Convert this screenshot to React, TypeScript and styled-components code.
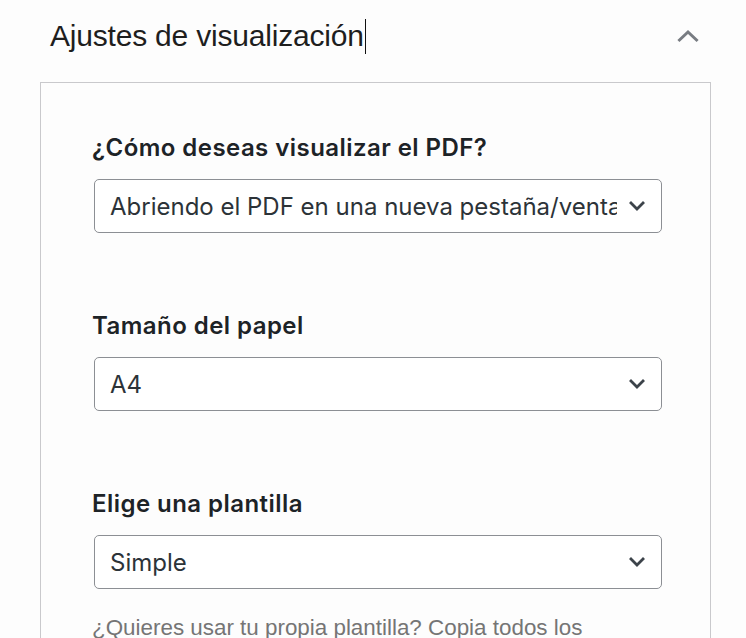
import styled, { createGlobalStyle } from "styled-components";

const GlobalStyle = createGlobalStyle`
    html, body {
        margin: 0;
        padding: 0;
        background: #fdfdfd;
    }
    body {
        font-family: "Liberation Sans", Arial, sans-serif;
        overflow: hidden;
    }
`

const Wrap = styled.div`
    width: 671px;
    margin-left: 40px;
    height: 638px;
    display: flex;
    flex-direction: column;
`

const Header = styled.div`
    display: flex;
    align-items: center;
    justify-content: space-between;
    height: 40px;
    padding: 16px 11px 0 10px;
    margin-bottom: 26px;
`

const Title = styled.h2`
    margin: 0;
    font-family: "Liberation Sans", Arial, sans-serif;
    font-weight: 400;
    font-size: 30px;
    line-height: 40px;
    color: #1e1e1e;
    letter-spacing: -0.2px;
`

const Caret = styled.span`
    display: inline-block;
    width: 0;
    height: 35px;
    margin-left: 1px;
    border-left: 1.5px solid #111;
    vertical-align: -8px;
`

const ToggleIcon = styled.svg`
    width: 24px;
    height: 24px;
    color: #787c82;
`

const Panel = styled.div`
    flex: 1;
    border: 1px solid #c9c9cc;
    border-bottom: none;
    padding: 50px 48px 0 51px;
    display: flex;
    flex-direction: column;
`

const Field = styled.div`
    display: flex;
    flex-direction: column;
    margin-bottom: 78px;

    &:last-of-type {
        margin-bottom: 0;
    }
`

const Label = styled.label`
    font-family: Inter, "Noto Sans", sans-serif;
    font-weight: 600;
    font-size: 24px;
    line-height: 30px;
    letter-spacing: 0.45px;
    color: #1d2327;
    margin-bottom: 16px;
`

const SelectBox = styled.div`
    position: relative;
    margin-left: 2px;
`

const Select = styled.select`
    appearance: none;
    -webkit-appearance: none;
    width: 100%;
    height: 54px;
    box-sizing: border-box;
    border: 1px solid #8c8f94;
    border-radius: 5px;
    background: #fff;
    padding: 0 44px 0 15px;
    font-family: Inter, "Noto Sans", sans-serif;
    font-size: 24px;
    color: #2c3338;
    outline: none;
`

const SelectArrow = styled.svg`
    position: absolute;
    right: 13px;
    top: 50%;
    transform: translateY(-50%);
    width: 24px;
    height: 24px;
    color: #3c434a;
    pointer-events: none;
`

const Help = styled.p`
    margin: 26px 0 0;
    font-family: "Liberation Sans", Arial, sans-serif;
    font-size: 22.4px;
    line-height: 26px;
    color: #757575;
    white-space: nowrap;
`

const fields = [
    {
        label: "¿Cómo deseas visualizar el PDF?",
        value: "Abriendo el PDF en una nueva pestaña/ventana del navegador",
        options: [
            "Abriendo el PDF en una nueva pestaña/ventana del navegador",
            "Descargando el PDF",
        ],
    },
    { label: "Tamaño del papel", value: "A4", options: ["A4", "Carta"] },
    { label: "Elige una plantilla", value: "Simple", options: ["Simple"] },
]

const Chevron = ({ up }: { up?: boolean }) => (
    <path
        d={up ? "M3.5 16L12 8l8.5 8" : "M6 9l6 6 6-6"}
        fill="none"
        stroke="currentColor"
        strokeWidth={up ? 3 : 2.8}
        strokeLinecap="square"
    />
)

export default function App() {
    return (
        <>
            <GlobalStyle />
            <Wrap>
                <Header>
                    <Title>
                        Ajustes de visualización<Caret />
                    </Title>
                    <ToggleIcon viewBox="0 0 24 24">
                        <Chevron up />
                    </ToggleIcon>
                </Header>
                <Panel>
                    {fields.map((f, i) => (
                        <Field key={i}>
                            <Label>{f.label}</Label>
                            <SelectBox>
                                <Select defaultValue={f.value}>
                                    {f.options.map((o) => (
                                        <option key={o}>{o}</option>
                                    ))}
                                </Select>
                                <SelectArrow viewBox="0 0 24 24">
                                    <Chevron />
                                </SelectArrow>
                            </SelectBox>
                        </Field>
                    ))}
                    <Help>
                        ¿Quieres usar tu propia plantilla? Copia todos los
                    </Help>
                </Panel>
            </Wrap>
        </>
    )
}
